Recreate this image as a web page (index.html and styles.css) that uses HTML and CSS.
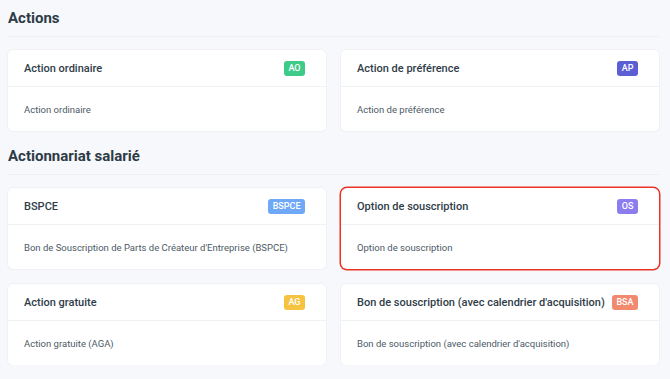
FILE: index.html
```html
<!DOCTYPE html>
<html>
<head>
    <link rel="stylesheet" href="styles.css">
</head>
<body>
    <div class="page">
        <h2 class="section-title">Actions</h2>
        <div class="grid">
            <div class="card">
                <div class="card-head">
                    <span class="card-title">Action ordinaire</span>
                    <span class="badge badge-green">AO</span>
                </div>
                <div class="card-body">Action ordinaire</div>
            </div>
            <div class="card">
                <div class="card-head">
                    <span class="card-title">Action de préférence</span>
                    <span class="badge badge-indigo">AP</span>
                </div>
                <div class="card-body">Action de préférence</div>
            </div>
        </div>

        <h2 class="section-title second">Actionnariat salarié</h2>
        <div class="grid">
            <div class="card">
                <div class="card-head">
                    <span class="card-title">BSPCE</span>
                    <span class="badge badge-blue">BSPCE</span>
                </div>
                <div class="card-body">Bon de Souscription de Parts de Créateur d'Entreprise (BSPCE)</div>
            </div>
            <div class="card selected">
                <div class="card-head">
                    <span class="card-title">Option de souscription</span>
                    <span class="badge badge-purple">OS</span>
                </div>
                <div class="card-body">Option de souscription</div>
            </div>
            <div class="card">
                <div class="card-head">
                    <span class="card-title">Action gratuite</span>
                    <span class="badge badge-yellow">AG</span>
                </div>
                <div class="card-body">Action gratuite (AGA)</div>
            </div>
            <div class="card">
                <div class="card-head">
                    <span class="card-title">Bon de souscription (avec calendrier d'acquisition)</span>
                    <span class="badge badge-orange">BSA</span>
                </div>
                <div class="card-body">Bon de souscription (avec calendrier d'acquisition)</div>
            </div>
        </div>
    </div>
</body>
</html>
```

FILE: styles.css
```css
body
{
    margin: 0;
    background-color: #f7f8fb;
    font-family: Roboto, "Noto Sans", sans-serif;
    color: #2f3d48;
}
.page
{
    width: 651px;
    padding: 6px 0 0 8px;
}
.section-title
{
    margin: 0 0 13px 0;
    padding-bottom: 6px;
    font-size: 15px;
    line-height: 24px;
    font-weight: 700;
    color: #2d3b46;
    border-bottom: 1px solid #eceef3;
}
.section-title.second
{
    margin-top: 13px;
}
.grid
{
    display: grid;
    grid-template-columns: minmax(0, 1fr) minmax(0, 1fr);
    gap: 15px;
}
.card
{
    background-color: #ffffff;
    border-radius: 5px;
    box-shadow: 0 0 0 1px #f0f1f5;
}
.card.selected
{
    box-shadow: 0 0 0 1.5px #ec3327;
    border-radius: 6px;
}
.card-head
{
    height: 36px;
    display: flex;
    align-items: center;
    justify-content: space-between;
    gap: 6px;
    padding: 0 21px 0 16px;
    border-bottom: 1px solid #f1f2f6;
}
.card-title
{
    font-size: 11px;
    font-weight: 500;
    color: #2f3d48;
    white-space: nowrap;
}
.card-body
{
    height: 44px;
    display: flex;
    align-items: center;
    padding: 0 16px;
    font-size: 9.5px;
    color: #4c5a66;
}
.badge
{
    height: 15px;
    line-height: 15px;
    padding: 0 4.5px;
    border-radius: 3px;
    font-size: 9px;
    font-weight: 500;
    color: #ffffff;
}
.badge-green
{
    background-color: #3ecb8a;
}
.badge-indigo
{
    background-color: #5b5fd3;
}
.badge-blue
{
    background-color: #6ea8f7;
}
.badge-purple
{
    background-color: #8c7cf0;
}
.badge-yellow
{
    background-color: #f5c33f;
}
.badge-orange
{
    background-color: #f18a6f;
}
```
